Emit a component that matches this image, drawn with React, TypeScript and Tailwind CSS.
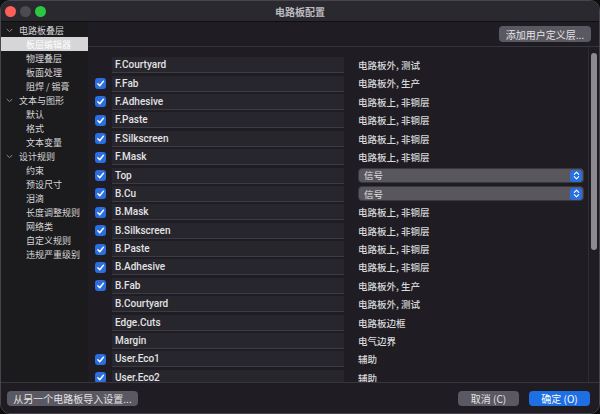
import React from "react";

type Layer = { name: string; checked: boolean; type: string; select?: boolean };

const layers: Layer[] = [
  { name: "F.Courtyard", checked: false, type: "电路板外, 测试" },
  { name: "F.Fab", checked: true, type: "电路板外, 生产" },
  { name: "F.Adhesive", checked: true, type: "电路板上, 非铜层" },
  { name: "F.Paste", checked: true, type: "电路板上, 非铜层" },
  { name: "F.Silkscreen", checked: true, type: "电路板上, 非铜层" },
  { name: "F.Mask", checked: true, type: "电路板上, 非铜层" },
  { name: "Top", checked: true, type: "信号", select: true },
  { name: "B.Cu", checked: true, type: "信号", select: true },
  { name: "B.Mask", checked: true, type: "电路板上, 非铜层" },
  { name: "B.Silkscreen", checked: true, type: "电路板上, 非铜层" },
  { name: "B.Paste", checked: true, type: "电路板上, 非铜层" },
  { name: "B.Adhesive", checked: true, type: "电路板上, 非铜层" },
  { name: "B.Fab", checked: true, type: "电路板外, 生产" },
  { name: "B.Courtyard", checked: false, type: "电路板外, 测试" },
  { name: "Edge.Cuts", checked: false, type: "电路板边框" },
  { name: "Margin", checked: false, type: "电气边界" },
  { name: "User.Eco1", checked: true, type: "辅助" },
  { name: "User.Eco2", checked: true, type: "辅助" },
];

type Nav = { label: string; parent?: boolean; selected?: boolean };
const nav: Nav[] = [
  { label: "电路板叠层", parent: true },
  { label: "板层编辑器", selected: true },
  { label: "物理叠层" },
  { label: "板面处理" },
  { label: "阻焊 / 锡膏" },
  { label: "文本与图形", parent: true },
  { label: "默认" },
  { label: "格式" },
  { label: "文本变量" },
  { label: "设计规则", parent: true },
  { label: "约束" },
  { label: "预设尺寸" },
  { label: "泪滴" },
  { label: "长度调整规则" },
  { label: "网络类" },
  { label: "自定义规则" },
  { label: "违规严重级别" },
];

const cjk = { fontFamily: '"Noto Sans CJK SC", "Noto Sans", sans-serif' };
const latin = { fontFamily: 'Roboto, "Noto Sans CJK SC", sans-serif' };

function Check() {
  return (
    <div className="w-[11px] h-[11px] rounded-[3px] bg-[#2a6ee0] flex items-center justify-center">
      <svg width="9" height="9" viewBox="0 0 10 10">
        <path d="M2 5.3 L4.2 7.5 L8.2 2.5" fill="none" stroke="white" strokeWidth="1.6" strokeLinecap="round" strokeLinejoin="round" />
      </svg>
    </div>
  );
}

function Chevron() {
  return (
    <svg width="7" height="5" viewBox="0 0 7 5">
      <path d="M1 1.2 L3.5 3.7 L6 1.2" fill="none" stroke="#8a8a8e" strokeWidth="1" strokeLinecap="round" />
    </svg>
  );
}

export default function App() {
  return (
    <div className="w-[600px] h-[414px] bg-[#0e0e10]">
      <div className="w-[600px] h-[414px] flex flex-col bg-[#1f1d23] rounded-[10px] overflow-hidden border border-[#48464c]">
        {/* title bar */}
        <div className="h-[21px] shrink-0 grid grid-cols-[1fr_auto_1fr] items-center bg-[#2b2930] border-b border-[#0f0f11]">
          <div className="flex items-center gap-[4px] pl-[4px]">
            <div className="w-[11px] h-[11px] rounded-full bg-[#fe5f57]" />
            <div className="w-[11px] h-[11px] rounded-full bg-[#4d4b52]" />
            <div className="w-[11px] h-[11px] rounded-full bg-[#29c840]" />
          </div>
          <div className="text-[10px] font-bold text-[#bdbcc0]" style={cjk}>电路板配置</div>
          <div />
        </div>

        {/* body */}
        <div className="flex-1 flex min-h-0">
          {/* sidebar */}
          <div className="w-[87px] shrink-0 bg-[#1b1b1d] pt-[1px] flex flex-col">
            {nav.map((n, i) => (
              <div
                key={i}
                className={
                  "h-[14px] flex items-center text-[9px] leading-none " +
                  (n.selected ? "bg-[#d6d6d8] text-white " : "text-[#d6d6d8] ") +
                  (n.parent ? "pl-[5px]" : "pl-[25px]")
                }
                style={cjk}
              >
                {n.parent && (
                  <span className="w-[13px] flex items-center">
                    <Chevron />
                  </span>
                )}
                {n.label}
              </div>
            ))}
          </div>

          {/* main */}
          <div className="flex-1 flex flex-col min-w-0">
            <div className="h-[25px] shrink-0 flex items-center justify-end pr-[8px] border-b border-[#36343b]">
              <div className="h-[16px] w-[92px] rounded-[4px] bg-[#5a5860] flex items-center justify-center text-[10px] text-[#e4e4e6]" style={cjk}>
                添加用户定义层...
              </div>
            </div>
            <div className="flex-1 flex min-h-0 overflow-hidden">
              <div className="flex-1 pt-[9px] pl-[7px] flex flex-col">
                {layers.map((l, i) => (
                  <div key={i} className="h-[18.4px] shrink-0 flex items-center">
                    <div className="w-[11px] h-[11px]">{l.checked && <Check />}</div>
                    <div
                      className="ml-[6px] w-[232px] h-[16px] bg-[#28262d] border-b border-[#3c3a42] flex items-center pl-[3px] text-[10px] font-medium text-[#e2e2e4]"
                      style={latin}
                    >
                      {l.name}
                    </div>
                    {l.select ? (
                      <div className="ml-[14px] w-[226px] h-[15px] rounded-[4px] bg-[#59575e] border border-[#3a383f] flex items-center justify-between pl-[5px] pr-[1px]">
                        <span className="text-[9.5px] text-[#e4e4e6]" style={cjk}>{l.type}</span>
                        <div className="w-[12px] h-[12px] rounded-[3px] bg-[#2a6ee0] flex items-center justify-center">
                          <svg width="7" height="9" viewBox="0 0 7 9">
                            <path d="M1.3 3.3 L3.5 1.2 L5.7 3.3 M1.3 5.7 L3.5 7.8 L5.7 5.7" fill="none" stroke="white" strokeWidth="1.1" strokeLinecap="round" strokeLinejoin="round" />
                          </svg>
                        </div>
                      </div>
                    ) : (
                      <div className="ml-[14px] text-[9.5px] font-medium text-[#d8d8da]" style={cjk}>
                        {l.type}
                      </div>
                    )}
                  </div>
                ))}
              </div>
              <div className="w-[11px] shrink-0 border-l border-[#2e2c33] bg-[#1f1d23] pt-[6px] flex justify-center">
                <div className="w-[6px] h-[197px] rounded-full bg-[#8c8b8f]" />
              </div>
            </div>
          </div>
        </div>

        {/* bottom bar */}
        <div className="h-[31px] shrink-0 border-t border-[#38363d] bg-[#1f1d23] flex items-center justify-between pl-[6px] pr-[9px]">
          <div className="h-[15px] w-[131px] rounded-[4px] bg-[#5a5860] flex items-center justify-center text-[10px] text-[#e4e4e6]" style={cjk}>
            从另一个电路板导入设置...
          </div>
          <div className="flex items-center gap-[10px]">
            <div className="h-[15px] w-[61px] rounded-[4px] bg-[#5a5860] flex items-center justify-center text-[10px] text-[#e4e4e6]" style={cjk}>
              取消 (C)
            </div>
            <div className="h-[15px] w-[61px] rounded-[4px] bg-[#1e6fe3] flex items-center justify-center text-[10px] text-white" style={cjk}>
              确定 (O)
            </div>
          </div>
        </div>
      </div>
    </div>
  );
}
